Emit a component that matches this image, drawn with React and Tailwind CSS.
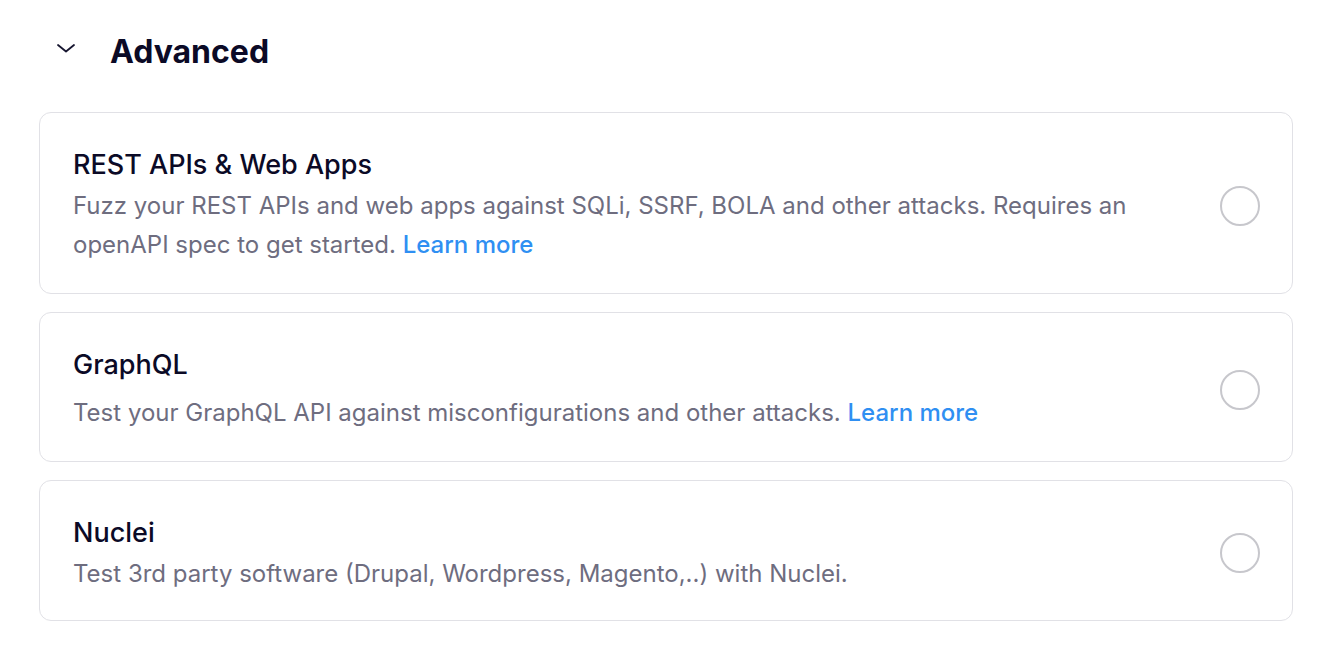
const options = [
    {
        title: "REST APIs & Web Apps",
        text: "Fuzz your REST APIs and web apps against SQLi, SSRF, BOLA and other attacks. Requires an openAPI spec to get started.",
        link: true
    },
    {
        title: "GraphQL",
        text: "Test your GraphQL API against misconfigurations and other attacks.",
        link: true
    },
    {
        title: "Nuclei",
        text: "Test 3rd party software (Drupal, Wordpress, Magento,..) with Nuclei.",
        link: false
    }
];

export default function App() {
    return (
        <div
            className="min-h-screen bg-white pt-[33px] pl-[39px] pr-[45px]"
            style={{ fontFamily: "Inter, 'Noto Sans', sans-serif" }}
        >

            {/* HEADER */}
            <div className="flex items-start">
                <svg
                    width="20"
                    height="10"
                    viewBox="0 0 20 10"
                    fill="none"
                    className="ml-[17px] mt-[10px]"
                >
                    <polyline
                        points="2,2 10,8.5 18,2"
                        stroke="#16152f"
                        strokeWidth="1.8"
                        strokeLinecap="round"
                        strokeLinejoin="round"
                    />
                </svg>
                <h2 className="ml-[34px] text-[32px] leading-[38px] font-bold text-[#0b0a26]">
                    Advanced
                </h2>
            </div>

            {/* OPTIONS */}
            <div className="mt-[41px] flex flex-col gap-[18px]">
                {options.map((item) => (
                    <label
                        key={item.title}
                        className="flex items-center gap-10 rounded-[12px] border border-[#e1e1e6] bg-white pl-[33px] pr-[32px] pt-[35px] pb-[30px] cursor-pointer"
                    >
                        <div className="flex-1">
                            <h3 className="text-[27px] leading-[34px] font-medium text-[#0b0a26]">
                                {item.title}
                            </h3>
                            <p className="mt-[8px] text-[24px] leading-[32px] text-[#6e6d7f]">
                                {item.text}
                                {item.link && (
                                    <>
                                        {" "}
                                        <span className="inline-block mt-[7px] mb-[2px] font-medium text-[#2f8ff2]">
                                            Learn more
                                        </span>
                                    </>
                                )}
                            </p>
                        </div>
                        <span className="w-10 h-10 shrink-0 rounded-full border-2 border-[#c7c7cc]" />
                    </label>
                ))}
            </div>

        </div>
    );
}
